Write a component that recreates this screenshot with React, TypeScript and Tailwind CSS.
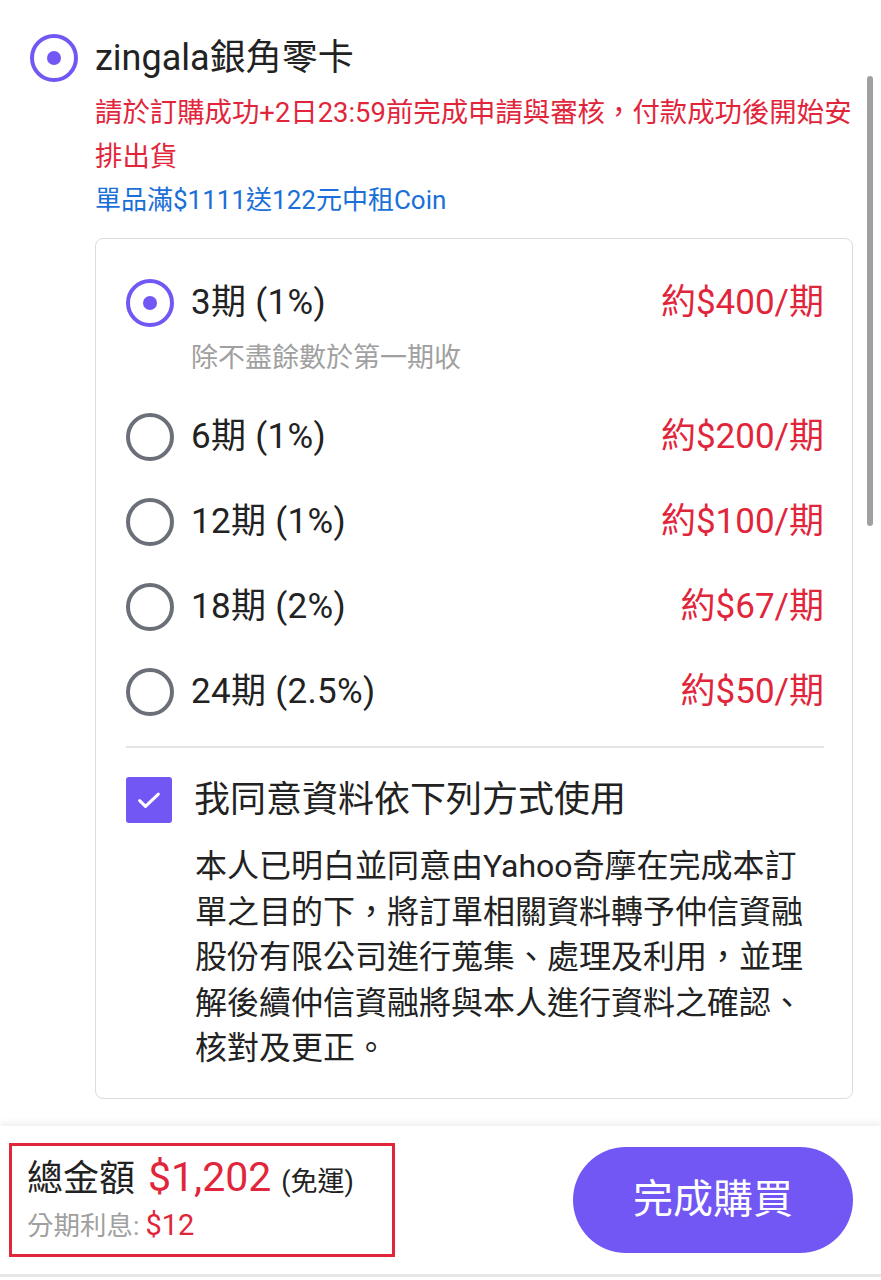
import React from "react";

const PURPLE = "#7257f5";

type Plan = { label: string; price: string; note?: string; selected?: boolean };

const plans: Plan[] = [
  { label: "3期 (1%)", price: "約$400/期", note: "除不盡餘數於第一期收", selected: true },
  { label: "6期 (1%)", price: "約$200/期" },
  { label: "12期 (1%)", price: "約$100/期" },
  { label: "18期 (2%)", price: "約$67/期" },
  { label: "24期 (2.5%)", price: "約$50/期" },
];

const consentLines = [
  "本人已明白並同意由Yahoo奇摩在完成本訂",
  "單之目的下，將訂單相關資料轉予仲信資融",
  "股份有限公司進行蒐集、處理及利用，並理",
  "解後續仲信資融將與本人進行資料之確認、",
  "核對及更正。",
];

function Radio({ checked }: { checked?: boolean }) {
  return (
    <span
      className={`flex h-[48px] w-[48px] shrink-0 items-center justify-center rounded-full border-[4px] ${
        checked ? "border-[#7257f5]" : "border-[#6b6f78]"
      }`}
    >
      {checked && <span className="h-[14px] w-[14px] rounded-full bg-[#7257f5]" />}
    </span>
  );
}

export default function App() {
  return (
    <div
      className="relative h-[1280px] w-[881px] overflow-hidden bg-white text-[#222]"
      style={{ fontFamily: 'Roboto, "Noto Sans CJK TC", sans-serif' }}
    >
      {/* overlay scrollbar */}
      <div className="absolute left-[867px] top-[76px] h-[450px] w-[6px] rounded-full bg-[#a0a0a0]" />

      <div className="pl-[30px] pt-[34px] pr-[28px]">
        <div className="flex items-center gap-[17px]">
          <Radio checked />
          <span className="text-[36px] leading-[48px]">zingala銀角零卡</span>
        </div>

        <div className="pl-[65px]">
          <p className="mt-[9px] whitespace-nowrap text-[27.4px] leading-[44px] text-[#e1263c]">
            請於訂購成功+2日23:59前完成申請與審核，付款成功後開始安
            <br />
            排出貨
          </p>
          <p className="text-[26px] leading-[42px] text-[#1a6fd8]">單品滿$1111送122元中租Coin</p>

          <div className="mt-[17px] rounded-[8px] border border-[#dcdcdc] pl-[30px] pr-[28px] pb-[26px] pt-[40px]">
            <div className="flex flex-col">
              {plans.map((p, i) => (
                <div key={i} className={i === 0 ? "" : "mt-[37px]"}>
                  <div className="flex items-center">
                    <Radio checked={p.selected} />
                    <span className="ml-[17px] whitespace-pre text-[35px] leading-[48px] tracking-[0.3px]">{p.label}</span>
                    <span className="ml-auto text-[35px] leading-[48px] text-[#e1263c]">{p.price}</span>
                  </div>
                  {p.note && (
                    <div className="mt-[13px] pl-[65px] text-[27px] leading-[36px] text-[#a0a0a0]">{p.note}</div>
                  )}
                </div>
              ))}
            </div>

            <div className="mt-[30px] h-[2px] bg-[#e4e4e4]" />

            <div className="mt-[29px] flex items-center">
              <span className="flex h-[46px] w-[46px] shrink-0 items-center justify-center rounded-[3px] bg-[#7257f5]">
                <svg width="28" height="28" viewBox="0 0 24 24" fill="none" stroke="white" strokeWidth="2.6" strokeLinecap="round" strokeLinejoin="round">
                  <path d="M4 12.5l5 5L20 7" />
                </svg>
              </span>
              <span className="ml-[22px] text-[36px] leading-[46px]">我同意資料依下列方式使用</span>
            </div>

            <div className="mt-[21px] pl-[69px] text-[32px] leading-[45.5px] text-[#222]">
              {consentLines.map((l, i) => (
                <div key={i} className="whitespace-nowrap">{l}</div>
              ))}
            </div>
          </div>
        </div>
      </div>

      {/* footer */}
      <div className="absolute left-0 right-0 top-[1126px] h-[151px] border-b-[3px] border-[#e6e6e6] bg-white shadow-[0_-4px_6px_rgba(0,0,0,0.06)]">
        <div className="flex h-full items-center justify-between pl-[9px] pr-[28px]">
          <div className="flex h-[114px] w-[386px] flex-col justify-center border-[3px] border-[#e1263c] pl-[15px]">
            <div className="flex items-baseline">
              <span className="text-[36px] leading-[46px]">總金額</span>
              <span className="ml-[13px] text-[41px] leading-[46px] text-[#e1263c]">$1,202</span>
              <span className="ml-[10px] text-[27px] leading-[46px]">(免運)</span>
            </div>
            <div className="flex items-baseline">
              <span className="text-[26.5px] leading-[40px] text-[#a0a0a0]">分期利息:</span>
              <span className="ml-[6px] text-[29px] leading-[40px] text-[#e1263c]">$12</span>
            </div>
          </div>
          <button
            className="flex h-[106px] w-[280px] items-center justify-center rounded-full text-[40px] text-white"
            style={{ backgroundColor: PURPLE }}
          >
            完成購買
          </button>
        </div>
      </div>
    </div>
  );
}
